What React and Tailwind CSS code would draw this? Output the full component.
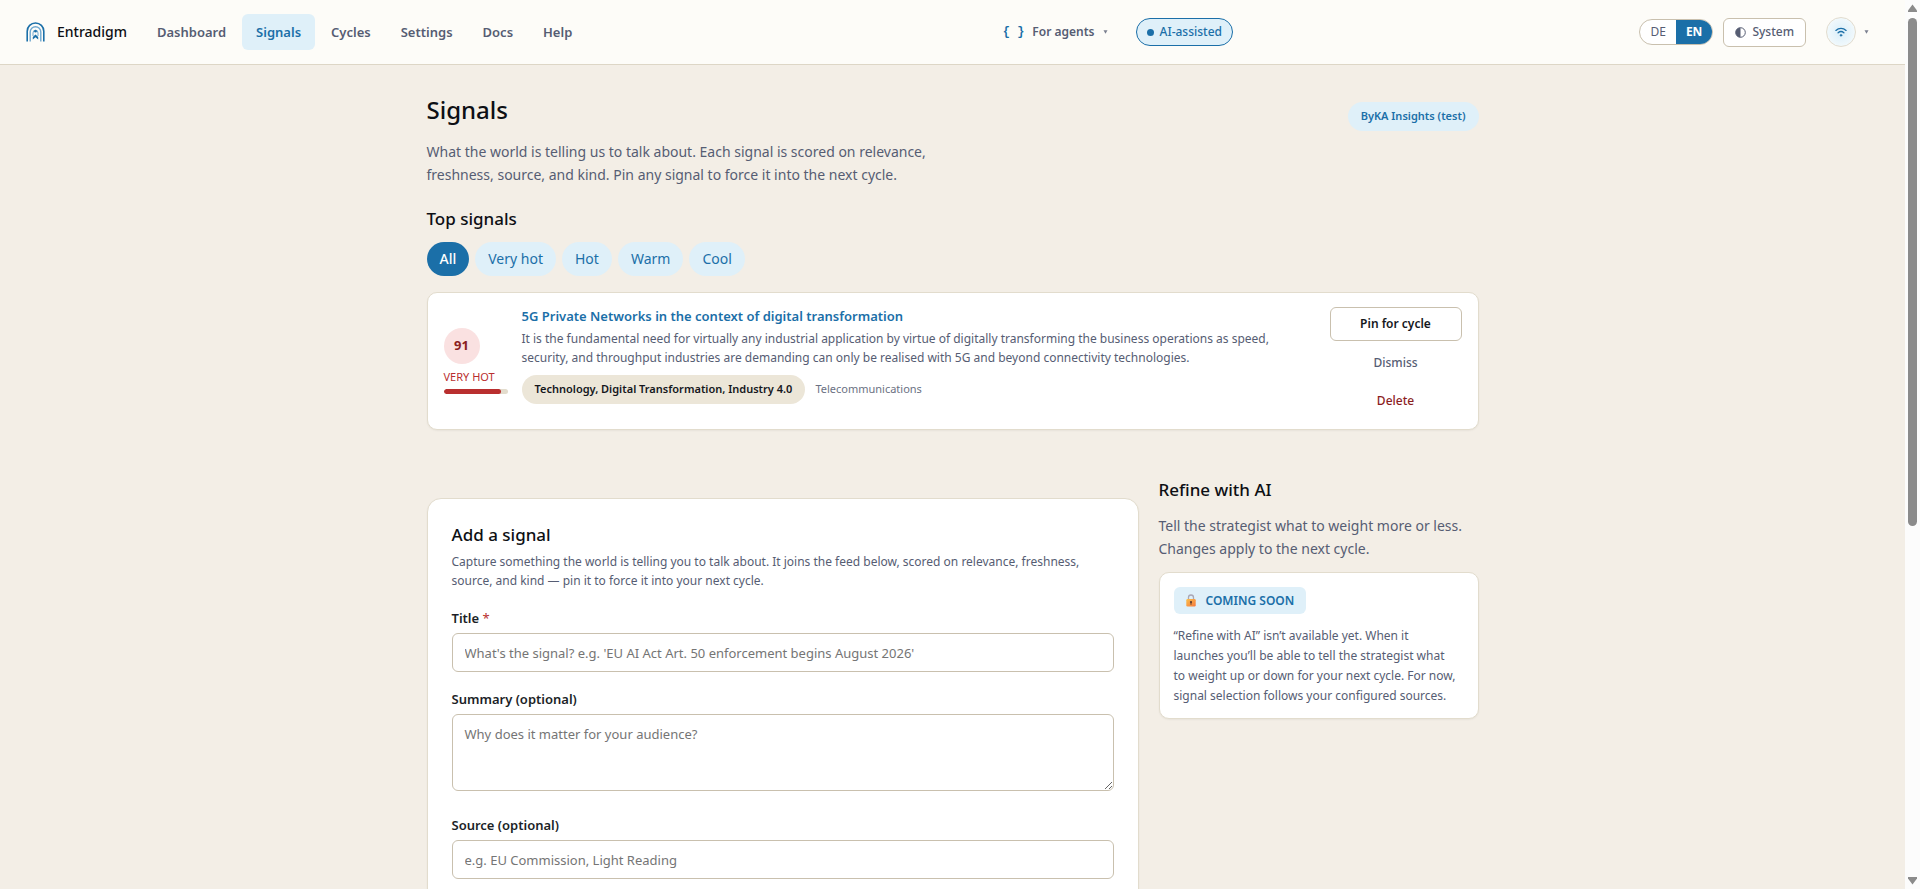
import { useState } from 'react'

const NAV = ['Dashboard', 'Signals', 'Cycles', 'Settings', 'Docs', 'Help']
const FILTERS = ['All', 'Very hot', 'Hot', 'Warm', 'Cool']

function Logo() {
  return (
    <svg width="19" height="20" viewBox="0 0 19 20" fill="none" stroke="#1b6fa8">
      <path d="M1.2 19.5V9.3a8.3 8.3 0 0 1 16.6 0v10.2" strokeWidth="1.6" />
      <path d="M4.2 19.5V10a5.3 5.3 0 0 1 10.6 0v9.5" stroke="#6fa8cf" strokeWidth="1.4" />
      <path d="M7 14V11a2.5 2.9 0 0 1 5 0v3" stroke="#6fa8cf" strokeWidth="1" />
      <path d="M6.8 17.5V15l2.7-2.6 2.7 2.6v2.5l-2.7-2.2z" fill="#1b6fa8" stroke="none" />
      <circle cx="9.5" cy="9.3" r="1.3" fill="#1b6fa8" stroke="none" />
    </svg>
  )
}

function Lock() {
  return (
    <svg width="10" height="13" viewBox="0 0 10 13" fill="none">
      <defs>
        <linearGradient id="lock" x1="0" y1="0" x2="1" y2="1">
          <stop offset="0" stopColor="#fbc04a" />
          <stop offset="1" stopColor="#f5793f" />
        </linearGradient>
      </defs>
      <path d="M2.5 6V3.5a2.5 2.5 0 0 1 5 0V6" stroke="#a9a7b5" strokeWidth="1.3" />
      <rect x="0.3" y="5" width="9.4" height="7.5" rx="1.2" fill="url(#lock)" />
      <circle cx="5" cy="8" r="1.1" fill="#5a3a31" />
      <rect x="4.5" y="8" width="1" height="2.7" fill="#5a3a31" />
    </svg>
  )
}

function Caret() {
  return (
    <svg width="5" height="4" viewBox="0 0 5 4" fill="#7b8090">
      <path d="M0.5 0.3h4L2.5 3.8z" />
    </svg>
  )
}

function Header() {
  const [lang, setLang] = useState('EN')

  return (
    <header className="flex h-[65px] items-center justify-between border-b border-[#ddd6c6] bg-[#fdfcf8] pl-[26px] pr-9 text-[13px] font-semibold text-[#565d73]">
      <div className="flex items-center">
        <a href="#" className="flex items-center gap-3 text-sm font-medium text-[#0d0f14]">
          <Logo />
          Entradigm
        </a>
        <nav className="ml-4 flex gap-0.5">
          {NAV.map((item) => (
            <a
              key={item}
              href="#"
              className={`rounded-md px-3.5 py-2 leading-5 ${item === 'Signals' ? 'bg-[#dff0f9] text-[#1b6fa8]' : ''}`}
            >
              {item}
            </a>
          ))}
        </nav>
      </div>

      <div className="ml-2.5 flex items-center gap-7">
        <button type="button" className="flex items-center gap-2 text-xs">
          <span className="font-['Liberation_Mono',monospace] font-bold text-[#1b6fa8]">{'{ }'}</span>
          For agents
          <Caret />
        </button>
        <button
          type="button"
          className="flex h-7 items-center gap-1.5 rounded-full border border-[#1b6fa8] bg-[#dff0f9] px-2.5 text-xs font-medium text-[#1b6fa8]"
        >
          <span className="size-[7px] rounded-full bg-[#1b6fa8]" />
          AI-assisted
        </button>
      </div>

      <div className="flex items-center">
        <div className="flex h-[26px] overflow-hidden rounded-full border border-[#c9c0ae] bg-white text-xs">
          {['DE', 'EN'].map((code) => (
            <button
              key={code}
              type="button"
              onClick={() => setLang(code)}
              className={`px-2.5 ${lang === code ? 'bg-[#1b6fa8] font-bold text-white' : 'font-normal'}`}
            >
              {code}
            </button>
          ))}
        </div>
        <button
          type="button"
          className="ml-2.5 flex h-[29px] items-center gap-1.5 rounded-md border border-[#c9c0ae] bg-white px-[11px] text-xs font-medium"
        >
          <svg width="11" height="11" viewBox="0 0 11 11">
            <circle cx="5.5" cy="5.5" r="4.8" fill="none" stroke="#565d73" />
            <path d="M5.5 0.7a4.8 4.8 0 0 0 0 9.6z" fill="#565d73" />
          </svg>
          System
        </button>
        <button type="button" aria-label="Account" className="ml-5 flex items-center gap-2">
          <span className="flex size-[30px] items-center justify-center rounded-full border border-[#e2dccf] bg-radial from-[#d9eef9] to-[#fbfdfd]">
            <svg width="12" height="10" viewBox="0 0 12 10" fill="none" stroke="#1b6fa8" strokeWidth="1.3" strokeLinecap="round">
              <path d="M0.9 3.4a7.5 7.5 0 0 1 10.2 0" />
              <path d="M3.1 5.8a4.4 4.4 0 0 1 5.8 0" />
              <circle cx="6" cy="8.3" r="0.9" fill="#1b6fa8" strokeWidth="0.6" />
            </svg>
          </span>
          <Caret />
        </button>
      </div>
    </header>
  )
}

function SignalCard() {
  return (
    <article className="mt-4 flex rounded-[10px] border border-[#e2dccd] bg-white px-4 pt-3.5 pb-3 shadow-xs">
      <div className="flex w-16 shrink-0 flex-col self-center pb-0.5">
        <span className="flex size-9 items-center justify-center rounded-full bg-[#fae1e1] text-[13px] font-bold text-[#8b1e1e]">
          91
        </span>
        <span className="mt-1 whitespace-nowrap text-[11px] leading-[18px] text-[#b92f2f]">VERY HOT</span>
        <div className="mt-[3px] h-[5px] overflow-hidden rounded-full bg-[#e3dccd]">
          <div className="h-full w-[90%] rounded-full bg-[#b92f2f]" />
        </div>
      </div>

      <div className="ml-3.5 min-w-0 flex-1">
        <h3 className="text-[13px] leading-[18px] font-semibold text-[#1b6fa8]">
          <a href="#">5G Private Networks in the context of digital transformation</a>
        </h3>
        <p className="mt-1 max-w-[770px] text-xs leading-[19px] text-[#565d73]">
          It is the fundamental need for virtually any industrial application by virtue of digitally transforming the
          business operations as speed, security, and throughput industries are demanding can only be realised with 5G
          and beyond connectivity technologies.
        </p>
        <div className="mt-2 flex items-center gap-2.5 text-[11px]">
          <span className="flex h-[29px] items-center rounded-full bg-[#ece6d8] px-[13px] font-semibold text-[#15171c]">
            Technology, Digital Transformation, Industry 4.0
          </span>
          <span className="text-[#6b7183]">Telecommunications</span>
        </div>
      </div>

      <div className="flex w-[132px] shrink-0 flex-col gap-1.5 text-xs font-medium">
        <button type="button" className="h-[34px] rounded-md border border-[#c9c0ae] font-semibold text-[#15171c]">
          Pin for cycle
        </button>
        <button type="button" className="h-8 text-[#565d73]">
          Dismiss
        </button>
        <button type="button" className="h-8 text-[#8b1e1e]">
          Delete
        </button>
      </div>
    </article>
  )
}

function AddSignal() {
  const label = 'mb-[5px] block text-[13px] leading-5 font-semibold text-[#1c1f27]'
  const field =
    'block w-full rounded-md border border-[#c9c0ae] bg-white px-3 text-[13px] placeholder:text-[#757575]'

  return (
    <form className="mt-5 min-w-0 flex-1 rounded-[14px] border border-[#e2dccd] bg-white p-6 shadow-xs">
      <h2 className="text-[17px] leading-6 font-medium text-[#0d0f14]">Add a signal</h2>
      <p className="mt-[5px] text-xs leading-[19px] text-[#565d73]">
        Capture something the world is telling you to talk about. It joins the feed below, scored on relevance,
        freshness, source, and kind — pin it to force it into your next cycle.
      </p>

      <div className="mt-[18px]">
        <label htmlFor="title" className={label}>
          Title <span className="font-normal text-[#b92f2f]">*</span>
        </label>
        <input
          id="title"
          type="text"
          className={`h-[39px] ${field}`}
          placeholder="What's the signal? e.g. 'EU AI Act Art. 50 enforcement begins August 2026'"
        />
      </div>
      <div className="mt-[17px]">
        <label htmlFor="summary" className={label}>
          Summary (optional)
        </label>
        <textarea id="summary" className={`h-[77px] py-[9px] leading-5 ${field}`} placeholder="Why does it matter for your audience?" />
      </div>
      <div className="mt-6">
        <label htmlFor="source" className={label}>
          Source (optional)
        </label>
        <input id="source" type="text" className={`h-[39px] ${field}`} placeholder="e.g. EU Commission, Light Reading" />
      </div>
    </form>
  )
}

function RefinePanel() {
  return (
    <aside className="w-80 shrink-0">
      <h2 className="text-[17px] leading-6 font-medium text-[#0d0f14]">Refine with AI</h2>
      <p className="mt-3 text-sm leading-[23px] text-[#565d73]">
        Tell the strategist what to weight more or less. Changes apply to the next cycle.
      </p>
      <div className="mt-3 rounded-[10px] border border-[#e2dccd] bg-white px-3.5 pt-3.5 pb-3 shadow-xs">
        <span className="inline-flex h-[27px] items-center gap-2.5 rounded-md bg-[#dff0f9] px-3 text-xs font-semibold text-[#1b6fa8]">
          <Lock />
          COMING SOON
        </span>
        <p className="mt-3 pr-1.5 text-xs leading-5 text-[#565d73]">
          “Refine with AI” isn’t available yet. When it launches you’ll be able to tell the strategist what to weight up
          or down for your next cycle. For now, signal selection follows your configured sources.
        </p>
      </div>
    </aside>
  )
}

function Scrollbar() {
  return (
    <div className="flex w-[15px] shrink-0 flex-col items-center bg-[#fcfcfc] py-1">
      <svg width="9" height="8" viewBox="0 0 9 8" fill="#8b8b8b">
        <path d="M4.5 0.5L9 6.5V8H0V6.5z" />
      </svg>
      <div className="mt-1.5 h-[508px] w-[9px] rounded-full bg-[#8b8b8b]" />
      <svg className="mt-auto" width="9" height="8" viewBox="0 0 9 8" fill="#8b8b8b">
        <path d="M4.5 7.5L9 1.5V0H0V1.5z" />
      </svg>
    </div>
  )
}

export default function App() {
  const [filter, setFilter] = useState('All')

  return (
    <div className="flex h-screen bg-[#f3eee6] font-['Noto_Sans','Open_Sans',sans-serif] text-[#15171c]">
      <div className="min-w-0 flex-1 overflow-y-auto [scrollbar-width:none]">
        <Header />
        <main className="mx-auto max-w-[1100px] px-6 pt-[29px] pb-12">
          <div className="flex items-start justify-between">
            <div>
              <h1 className="text-2xl leading-8 font-medium text-[#0d0f14]">Signals</h1>
              <p className="mt-3.5 max-w-[520px] text-sm leading-[23px] text-[#565d73]">
                What the world is telling us to talk about. Each signal is scored on relevance, freshness, source, and
                kind. Pin any signal to force it into the next cycle.
              </p>
            </div>
            <span className="mt-2 flex h-[29px] items-center rounded-full bg-[#dff0f9] px-[13px] text-[11px] font-semibold text-[#1b6fa8]">
              ByKA Insights (test)
            </span>
          </div>

          <h2 className="mt-[21px] text-[17px] leading-6 font-medium text-[#0d0f14]">Top signals</h2>
          <div className="mt-[11px] flex gap-1.5">
            {FILTERS.map((f) => (
              <button
                key={f}
                type="button"
                onClick={() => setFilter(f)}
                className={`h-[34px] rounded-full px-[13px] text-sm ${
                  filter === f ? 'bg-[#1b6fa8] font-medium text-white' : 'bg-[#dff0f9] text-[#1b6fa8]'
                }`}
              >
                {f}
              </button>
            ))}
          </div>

          <SignalCard />

          <div className="mt-12 flex items-start gap-5">
            <AddSignal />
            <RefinePanel />
          </div>
        </main>
      </div>
      <Scrollbar />
    </div>
  )
}
